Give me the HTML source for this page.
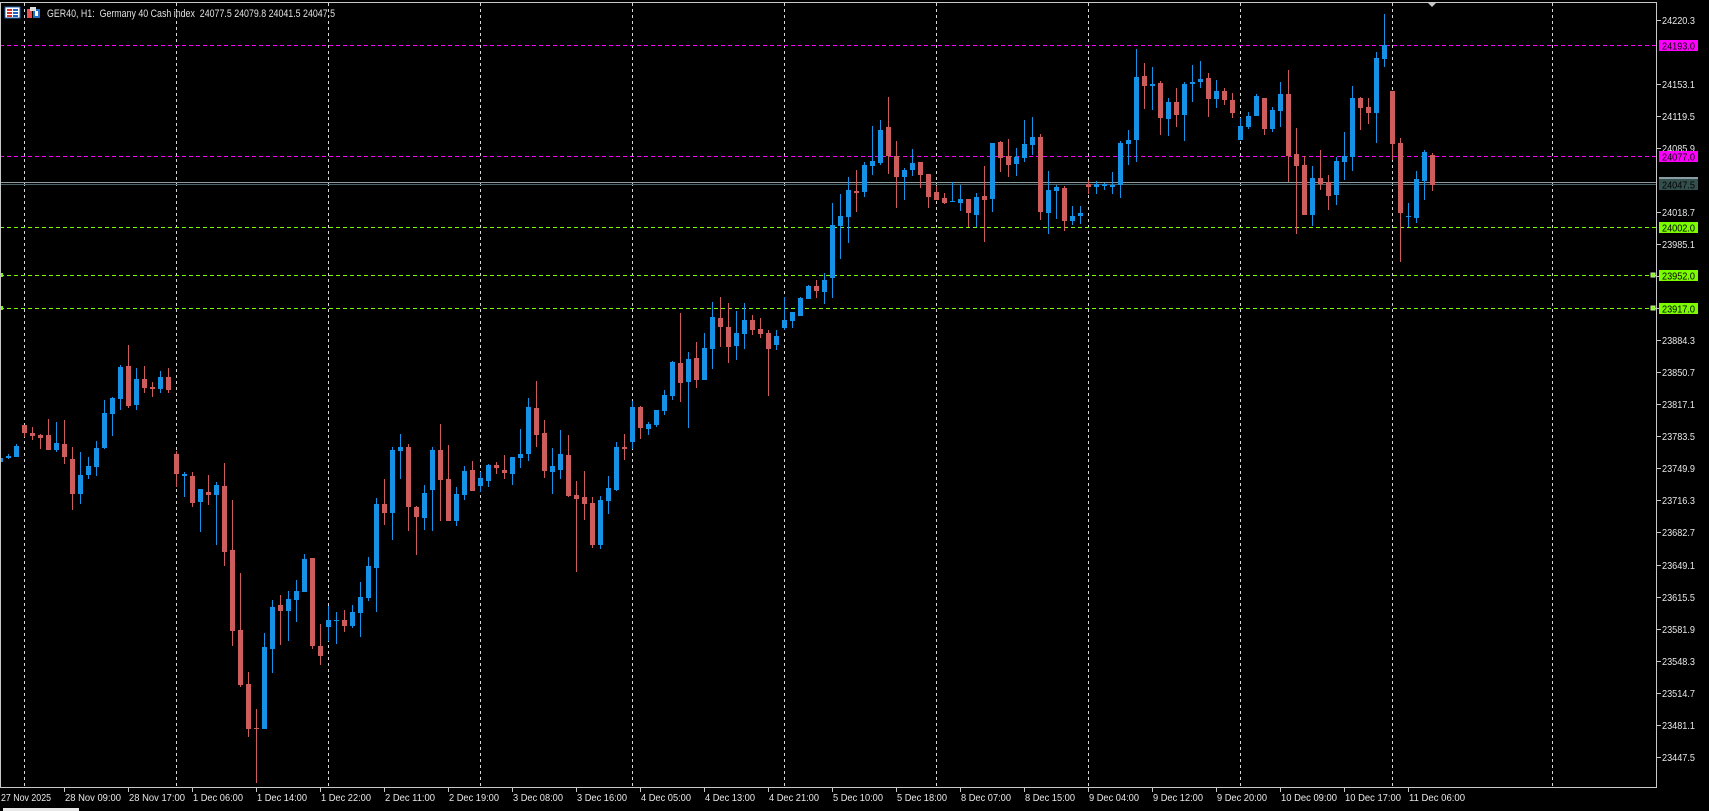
<!DOCTYPE html>
<html><head><meta charset="utf-8"><style>
html,body{margin:0;padding:0;background:#000;width:1709px;height:811px;overflow:hidden}
svg{display:block}
text{font-family:"Liberation Sans",sans-serif}
</style></head><body>
<svg id="c" width="1709" height="811" viewBox="0 0 1709 811" xmlns="http://www.w3.org/2000/svg">
<rect width="1709" height="811" fill="#000"/>
<g stroke="#d8d8d8" stroke-width="1" stroke-dasharray="3,3">
<line x1="24.5" y1="3" x2="24.5" y2="788"/><line x1="176.5" y1="3" x2="176.5" y2="788"/><line x1="328.5" y1="3" x2="328.5" y2="788"/><line x1="480.5" y1="3" x2="480.5" y2="788"/><line x1="632.5" y1="3" x2="632.5" y2="788"/><line x1="784.5" y1="3" x2="784.5" y2="788"/><line x1="936.5" y1="3" x2="936.5" y2="788"/><line x1="1088.5" y1="3" x2="1088.5" y2="788"/><line x1="1240.5" y1="3" x2="1240.5" y2="788"/><line x1="1392.5" y1="3" x2="1392.5" y2="788"/><line x1="1552.5" y1="3" x2="1552.5" y2="788"/>
</g>
<line x1="256.5" y1="770" x2="256.5" y2="783" stroke="#cd5c5c"/>
<g stroke-width="1" stroke-dasharray="4,3">
<line x1="0" y1="45.5" x2="1656" y2="45.5" stroke="#ff00ff"/>
<line x1="0" y1="156.5" x2="1656" y2="156.5" stroke="#ff00ff"/>
<line x1="0" y1="227.5" x2="1656" y2="227.5" stroke="#7cfc00"/>
<line x1="0" y1="275.5" x2="1656" y2="275.5" stroke="#7cfc00"/>
<line x1="0" y1="308.5" x2="1656" y2="308.5" stroke="#7cfc00"/>
</g>
<line x1="0" y1="182.5" x2="1656" y2="182.5" stroke="#8a9ca4"/>
<line x1="0" y1="184.5" x2="1656" y2="184.5" stroke="#4a6468"/>
<g id="cd"></g>
<rect x="1651" y="273" width="4" height="4" fill="#7cfc00" stroke="#c8e8a0"/>
<rect x="1651" y="306" width="4" height="4" fill="#7cfc00" stroke="#c8e8a0"/>
<rect x="0" y="273" width="3" height="4" fill="#7cfc00"/>
<rect x="0" y="306" width="3" height="4" fill="#7cfc00"/>
<path d="M1428 3 L1436 3 L1432 7 Z" fill="#c8c8c8"/>
<line x1="0" y1="2.5" x2="1657" y2="2.5" stroke="#c8c8c8"/>
<line x1="1656.5" y1="2" x2="1656.5" y2="788" stroke="#c8c8c8"/>
<line x1="0" y1="787.5" x2="1657" y2="787.5" stroke="#c8c8c8"/>
<line x1="0.5" y1="2" x2="0.5" y2="788" stroke="#c8c8c8"/>
<g id="ax" fill="#e8e8e8" font-size="10.5"></g>
<rect x="1659" y="40" width="39" height="11" fill="#ff00ff"/><text x="1662" y="49.5" font-size="10.5" textLength="33" lengthAdjust="spacingAndGlyphs" fill="#000">24193.0</text>
<rect x="1659" y="151" width="39" height="11" fill="#ff00ff"/><text x="1662" y="160.5" font-size="10.5" textLength="33" lengthAdjust="spacingAndGlyphs" fill="#000">24077.0</text>
<rect x="1659" y="177" width="39" height="2" fill="#8a9ca4"/>
<rect x="1659" y="179" width="39" height="11" fill="#34504e"/><text x="1662" y="188.5" font-size="10.5" textLength="33" lengthAdjust="spacingAndGlyphs" fill="#000">24047.5</text>
<rect x="1659" y="222" width="39" height="11" fill="#7cfc00"/><text x="1662" y="231.5" font-size="10.5" textLength="33" lengthAdjust="spacingAndGlyphs" fill="#000">24002.0</text>
<rect x="1659" y="270" width="39" height="11" fill="#7cfc00"/><text x="1662" y="279.5" font-size="10.5" textLength="33" lengthAdjust="spacingAndGlyphs" fill="#000">23952.0</text>
<rect x="1659" y="303" width="39" height="11" fill="#7cfc00"/><text x="1662" y="312.5" font-size="10.5" textLength="33" lengthAdjust="spacingAndGlyphs" fill="#000">23917.0</text>
<g id="tx" fill="#e8e8e8" font-size="10.5"></g>
<rect x="3" y="808" width="76" height="3" fill="#e8e8e8"/>
<rect x="5" y="7" width="15" height="11" fill="#fff" stroke="#1f5fb0"/>
<rect x="7" y="9" width="5" height="2" fill="#d03030"/><rect x="7" y="12" width="5" height="2" fill="#d03030"/><rect x="7" y="15" width="5" height="2" fill="#d03030"/>
<rect x="13" y="9" width="5" height="2" fill="#2060c0"/><rect x="13" y="12" width="5" height="2" fill="#2060c0"/><rect x="13" y="15" width="5" height="2" fill="#2060c0"/>
<path d="M27 9 h5 v9 h-5 z" fill="#e85050"/><path d="M33 9 h7 v9 h-7 z" fill="#2070c8"/><rect x="30" y="7" width="6" height="4" fill="#ddd"/><rect x="35" y="11" width="3" height="5" fill="#fff"/>
<text x="47" y="17" font-size="11" fill="#e0e0e0" xml:space="preserve" textLength="288" lengthAdjust="spacingAndGlyphs">GER40, H1:  Germany 40 Cash index  24077.5 24079.8 24041.5 24047.5</text>
</svg>
<script>
var D=[
['B',457.7,461.7,457.7,461.7],['B',455.7,457.7,454,458.7],['B',446,456.7,444,456.7],['R',425,432.7,425,436.7],['R',432.7,435.7,427,439.7],
['R',435,437.7,434,448.7],['R',435,449.7,419,449.7],['B',443,449.7,422,451.7],['R',444,456.7,420,463.7],['R',459,493.7,447,509.7],
['B',475,493.7,452,503.7],['B',466,474.7,457,478.7],['B',448,466.7,441,475.7],['B',413,447.7,400,448.7],['B',398,413.7,397,435.7],
['B',367,398.7,365,409.7],['R',366,405.7,345,407.7],['B',379,404.7,368,409.7],['R',379,387.7,366,392.7],['R',387,388.7,382,396.7],
['B',377,388.7,371,392.7],['R',377,389.7,368,392.7],['R',454,473.7,451,486.7],['B',473.7,475.7,472,496.7],['R',476,502.7,472,506.7],
['B',489,501.7,489,531.7],['R',492,494.7,475,504.7],['B',485,494.7,482,544.7],['R',486,551.7,463,565.7],['R',550,630.7,500,645.7],
['R',630,684.7,573,686.7],['R',684,729,672,737],['R',728,729,709,783],['B',647,729,633,729],['B',607,649,600,673],
['R',605,611,595,645],['B',599,611,591,641],['B',591,600,580,622],['B',559,592,554,592],['R',558,646,558,649],
['R',646,656,624,665],['B',620,627,606,641],['B',620,621,612,644],['R',620,626,610,632],['B',612,626,605,628],
['B',597,613,582,637],['B',566,598,557,601],['B',504,568,498,612],['R',504,513,479,525],['B',450,513,447,540],
['B',447,451,434,479],['R',447,507,444,531],['R',507,517,506,555],['B',493,518,485,530],['B',450,490,447,531],
['R',450,480,424,521],['R',479,521,445,521],['B',494,521,487,526],['B',471,495,466,500],['R',470,491,461,491],
['B',478,486,472,492],['B',465,481,464,487],['R',465,468,462,474],['R',470,473,455,479],['B',457,474,457,485],
['B',454,458,429,468],['B',407,454,398,461],['R',408,435,381,447],['R',433,471,420,478],['B',466,472,448,494],
['B',454,470,430,479],['R',455,496,435,497],['R',495,499,481,572],['R',497,504,471,520],['R',503,545,497,548],
['B',500,545,496,549],['B',488,501,476,514],['B',447,490,442,491],['R',447,449,434,460],['B',407,442,401,449],
['R',407,428,406,439],['B',424,429,422,435],['B',410,425,410,427],['B',395,411,390,415],['B',362,396,361,400],
['R',363,383,313,402],['B',359,382,352,428],['R',358,380,342,388],['B',348,380,333,380],['B',317,349,302,369],
['R',318,327,297,347],['R',327,347,303,363],['B',333,346,311,360],['B',320,334,303,349],['R',320,330,315,335],
['R',329,334,318,338],['R',333,349,330,396],['B',336,345,330,350],['B',320,328,297,330],['B',312,321,312,328],
['B',298,316,297,316],['B',286,299,285,299],['R',286,291,280,298],['B',280,292,273,304],['B',225,278,203,298],
['B',216,226,194,259],['B',190,217,177,243],['R',191,193,170,212],['B',165,192,162,197],['B',161,166,126,175],
['B',130,163,120,165],['R',127,156,97,174],['R',156,177,141,208],['B',170,177,168,200],['B',163,170,149,176],
['R',162,175,162,188],['R',174,197,174,208],['R',192,200,186,200],['R',198,203,193,204],['B',201,202,182,202],
['B',199,203,185,211],['R',199,213,199,227],['B',197,215,193,227],['R',196,200,166,242],['B',143,199,143,212],
['R',142,158,141,172],['R',156,165,139,177],['B',157,164,148,176],['B',144,158,120,162],['B',137,145,117,155],
['R',137,212,134,220],['B',190,213,171,234],['B',187,191,185,219],['R',188,221,186,231],['B',216,221,206,225],
['B',213,216,206,224],['R',184,187,180,194],['B',184,187,181,194],['B',184,186,183,190],['B',185,187,172,194],
['B',143,185,141,198],['B',140,144,130,165],['B',77,140,49,162],['R',76,86,63,109],['B',84,86,67,110],
['R',83,118,81,135],['B',102,119,98,136],['R',102,115,88,127],['B',84,115,82,141],['B',82,84,65,102],
['B',79,82,61,88],['R',78,99,73,117],['B',91,99,80,108],['R',91,100,88,105],['R',100,113,93,118],
['B',126,140,118,140],['B',116,127,112,129],['B',96,116,94,116],['R',98,129,98,135],['B',110,129,107,132],
['B',94,111,82,127],['R',94,156,70,182],['R',154,166,128,234],['R',165,215,156,215],['B',178,215,166,226],
['R',178,184,150,190],['R',182,196,175,210],['B',161,195,157,205],['B',156,162,132,180],['B',98,157,86,171],
['R',98,108,97,130],['R',107,113,98,124],['B',58,113,52,143],['B',45,59,14,67],['R',91,144,91,160],
['R',143,213,138,262],['B',216,217,203,227],['B',179,218,171,223],['B',152,181,150,200],['R',155,185,153,191]
];
var g=document.getElementById('cd'),h='';
for(var k=0;k<D.length;k++){var d=D[k],c=d[0]=='B'?'#1592e6':'#cd5c5c',x=8*k;
var bt=Math.round(d[1]),bb=Math.round(d[2]);if(bb-bt<1)bb=bt+1;
h+='<rect x="'+x+'" y="'+Math.round(d[3])+'" width="1" height="'+Math.max(1,Math.round(d[4])-Math.round(d[3]))+'" fill="'+c+'"/>';
h+='<rect x="'+(x-2)+'" y="'+bt+'" width="5" height="'+Math.max(1,bb-bt)+'" fill="'+c+'"/>';}
g.innerHTML=h;
var ax='';for(var i=0;i<24;i++){var p=(24220.3-33.6*i).toFixed(1),y=20+32.03*i;
if(i==1||i==5)continue;
ax+='<rect x="1657" y="'+Math.round(y)+'" width="4" height="1" fill="#c8c8c8"/><text x="1662" y="'+(Math.round(y)+4)+'" textLength="33" lengthAdjust="spacingAndGlyphs">'+p+'</text>';}
document.getElementById('ax').innerHTML=ax;
var L=["27 Nov 2025","28 Nov 09:00","28 Nov 17:00","1 Dec 06:00","1 Dec 14:00","1 Dec 22:00","2 Dec 11:00","2 Dec 19:00","3 Dec 08:00","3 Dec 16:00","4 Dec 05:00","4 Dec 13:00","4 Dec 21:00","5 Dec 10:00","5 Dec 18:00","8 Dec 07:00","8 Dec 15:00","9 Dec 04:00","9 Dec 12:00","9 Dec 20:00","10 Dec 09:00","10 Dec 17:00","11 Dec 06:00"];
var t='';for(var i=0;i<L.length;i++){var x=64*i;var w=L[i].length>=12?56:50;
if(i>0)t+='<rect x="'+x+'" y="788" width="1" height="4" fill="#c8c8c8"/>';
t+='<text x="'+(x+1)+'" y="801" textLength="'+w+'" lengthAdjust="spacingAndGlyphs">'+L[i]+'</text>';}
document.getElementById('tx').innerHTML=t;
</script>
</body></html>
